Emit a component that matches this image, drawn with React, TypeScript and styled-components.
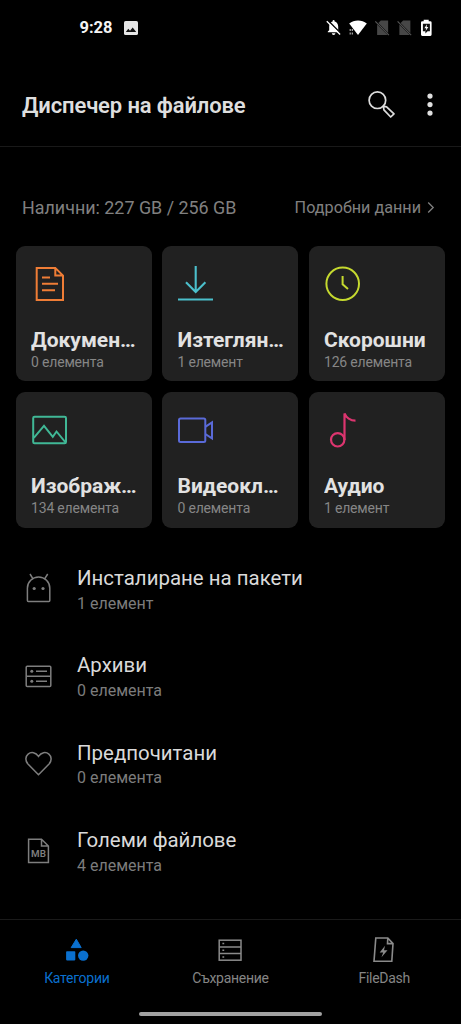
import React from "react";
import styled, { createGlobalStyle } from "styled-components";

const GlobalStyle = createGlobalStyle`
  * { box-sizing: border-box; }
  body {
    margin: 0;
    background: #000;
    font-family: Roboto, "Noto Sans", "Liberation Sans", sans-serif;
  }
  svg { display: block; flex: none; }
`;

const Screen = styled.div`
  width: 461px;
  height: 1024px;
  background: #000;
  display: flex;
  flex-direction: column;
  overflow: hidden;
`;

const StatusBar = styled.div`
  height: 56px;
  padding: 0 28px 0 79.5px;
  display: flex;
  align-items: center;
  justify-content: space-between;
`;

const StatusGroup = styled.div<{ $gap: number }>`
  display: flex;
  align-items: center;
  gap: ${(p) => p.$gap}px;
`;

const Clock = styled.span`
  font-size: 16.5px;
  line-height: 20px;
  font-weight: 700;
  color: #f4f4f4;
`;

const Header = styled.header`
  height: 91px;
  padding: 7px 20px 0 22px;
  display: flex;
  align-items: center;
  justify-content: space-between;
  border-bottom: 1px solid #191919;
`;

const Title = styled.h1`
  margin: 2px 0 0;
  font-size: 22px;
  line-height: 28px;
  font-weight: 600;
  letter-spacing: -0.13px;
  color: #dedede;
  white-space: nowrap;
`;

const HeaderActions = styled.div`
  display: flex;
  align-items: center;
  gap: 22px;
`;

const Summary = styled.div`
  height: 99px;
  padding: 22.5px 25px 0 22px;
  display: flex;
  align-items: center;
  justify-content: space-between;
  color: #808080;
  white-space: nowrap;
`;

const Available = styled.span`
  font-size: 17.9px;
  line-height: 24px;
`;

const Details = styled.span`
  display: flex;
  align-items: center;
  gap: 5px;
  font-size: 16.2px;
  line-height: 24px;
`;

const Grid = styled.div`
  margin: 0 16px;
  display: grid;
  grid-template-columns: repeat(3, 135.6px);
  grid-auto-rows: 135.4px;
  gap: 10.9px;
`;

const Card = styled.div`
  background: #212121;
  border-radius: 9px;
  padding: 20px 14px 0 15px;
  min-width: 0;
`;

const CardTitle = styled.div`
  margin-top: 25px;
  font-size: 21px;
  line-height: 26px;
  font-weight: 700;
  color: #e2e2e2;
  white-space: nowrap;
  overflow: hidden;
  text-overflow: ellipsis;
`;

const CardCount = styled.div`
  font-size: 14px;
  line-height: 18px;
  letter-spacing: -0.18px;
  color: #868686;
  white-space: nowrap;
`;

const List = styled.div`
  flex: 1;
  padding-top: 19.3px;
`;

const Row = styled.div`
  height: 87.4px;
  padding: 18px 22px 0 22px;
  display: flex;
  gap: 22px;
`;

const RowIcon = styled.div`
  padding-top: 7.5px;
`;

const RowTitle = styled.div`
  font-size: 20.45px;
  line-height: 26px;
  color: #dadada;
  white-space: nowrap;
`;

const RowCount = styled.div`
  margin-top: 0.7px;
  font-size: 16px;
  line-height: 24px;
  color: #7c7c7c;
  white-space: nowrap;
`;

const NavBar = styled.nav`
  height: 105px;
  border-top: 1px solid #1a1a1a;
  display: flex;
  flex-direction: column;
  align-items: center;
  justify-content: space-between;
  padding-bottom: 8px;
`;

const Tabs = styled.div`
  width: 100%;
  display: grid;
  grid-template-columns: repeat(3, 1fr);
`;

const Tab = styled.div<{ $active?: boolean }>`
  display: flex;
  flex-direction: column;
  align-items: center;
  padding-top: 15.6px;
  gap: 7.5px;
  font-size: 14px;
  line-height: 18px;
  letter-spacing: -0.28px;
  color: ${(p) => (p.$active ? "#0a70cf" : "#858585")};
`;

const HomeIndicator = styled.div`
  width: 183px;
  height: 4px;
  border-radius: 2px;
  background: #a2a2a2;
`;

const PictureIcon = () => (
  <svg width="14" height="14" viewBox="0 0 14 14">
    <rect width="14" height="14" rx="1.6" fill="#e6e6e6" />
    <path d="M1.8 11 L4.3 7.7 L6 9.8 L8.7 6.5 L12.2 11 Z" fill="#111" />
  </svg>
);

const StatusIcons = () => (
  <svg width="108" height="20" viewBox="325 18 108 20">
    <path d="M327.8 32.3 V31.6 L329.2 30.2 V26.5 C329.2 23.8 330.6 22 332.6 21.5 V20.9 A1 1 0 0 1 334.6 20.9 V21.5 C336.7 22 338.2 23.8 338.2 26.5 V30.2 L339.6 31.6 V32.3 Z" fill="#fff" />
    <path d="M331.8 33.2 H335.4 A1.8 1.8 0 0 1 331.8 33.2 Z" fill="#fff" />
    <path d="M327.8 20.3 L341.2 33.7" stroke="#000" strokeWidth="1.5" />
    <path d="M326.8 21.2 L340.1 34.5" stroke="#fff" strokeWidth="1.3" />
    <path d="M349.2 23.5 C354 19.5 362 19.5 366.8 23.5 L358 35 Z" fill="#fff" />
    <path d="M350.2 29 V34.6 M352.3 29 V34.6" stroke="#bbb" strokeWidth="1.1" strokeDasharray="2 1.6" />
    {[375.3, 397.6].map((x) => (
      <g key={x} transform={`translate(${x} 20.5)`}>
        <path d="M5.5 0 H12.8 V12.4 L3 2.6 Z" fill="#474747" />
        <path d="M1.8 4 V14.5 H12.3 Z" fill="#474747" />
        <path d="M0 .8 L13.6 14.6" stroke="#555" strokeWidth="1.1" />
      </g>
    ))}
    <path d="M423.7 19.8 H428.7 V21.2 H430.3 Q431.6 21.2 431.6 22.5 V34.6 Q431.6 36 430.3 36 H422.3 Q421 36 421 34.6 V22.5 Q421 21.2 422.3 21.2 H423.7 Z" fill="#fff" />
    <path d="M422.9 23.7 H429.9 V31.2 H427.6 L425.4 33.6 V31.2 H422.9 Z" fill="#111" />
    <path d="M427 24.3 L424.4 28.3 H426.2 L425.6 31 L428.4 27 H426.7 Z" fill="#fff" />
  </svg>
);

const SearchIcon = () => (
  <svg width="30" height="30" viewBox="0 0 30 30" fill="none" stroke="#dcdcdc">
    <circle cx="10.4" cy="10.2" r="8.3" strokeWidth="1.7" />
    <path d="M16.3 16.2 L19.6 16.8 L27 23.9 L23.7 27 L16.9 19.8 Z" strokeWidth="1.7" strokeLinejoin="round" />
  </svg>
);

const MoreIcon = () => (
  <svg width="22" height="24" viewBox="0 0 22 24" fill="#e0e0e0">
    <circle cx="11" cy="3.1" r="2.6" />
    <circle cx="11" cy="11.6" r="2.6" />
    <circle cx="11" cy="20.1" r="2.6" />
  </svg>
);

const ChevronIcon = () => (
  <svg width="10" height="14" viewBox="0 0 10 14" fill="none" stroke="#808080" strokeWidth="1.3">
    <path d="M2.2 1.5 L7.2 6.5 L2.2 11.5" />
  </svg>
);

const CardSvg = ({ color, children }: { color: string; children: React.ReactNode }) => (
  <svg width="36" height="36" viewBox="0 0 36 36" fill="none" stroke={color} strokeWidth="2">
    {children}
  </svg>
);

const DocumentIcon = () => (
  <CardSvg color="#ef7d36">
    <path d="M5.7 1.9 H24.3 L32 9.6 V33.9 H5.7 Z M24.3 1.9 V9.6 H32" />
    <path d="M11 11.5 H19 M11 17.7 H27 M11 24.2 H24" />
  </CardSvg>
);

const DownloadIcon = () => (
  <CardSvg color="#4bbfcb">
    <path d="M18.7 0 V25.5 M9 16.2 L18.7 26 L28.4 16.2 M1 33.5 H36" strokeWidth="2.1" />
  </CardSvg>
);

const RecentIcon = () => (
  <CardSvg color="#c5d92f">
    <circle cx="18.7" cy="17.8" r="16.3" />
    <path d="M18.6 10 V18.3 L24 23" />
  </CardSvg>
);

const ImageIcon = () => (
  <CardSvg color="#40b896">
    <rect x="2.2" y="4.7" width="32.8" height="26.6" rx="1.4" />
    <path d="M2.8 25.8 L13 13.8 L21.8 24.8 L25.5 19.5 L34.5 30.3" strokeWidth="1.9" />
  </CardSvg>
);

const VideoIcon = () => (
  <CardSvg color="#5a6ad8">
    <rect x="2" y="6.5" width="26.3" height="23.4" rx="1.5" />
    <path d="M28.3 14.8 L35 10.3 V26.4 L28.3 22" />
  </CardSvg>
);

const AudioIcon = () => (
  <CardSvg color="#dc356f">
    <circle cx="13.7" cy="27.8" r="6.7" strokeWidth="2.2" />
    <path d="M20.5 28 V1.5 C22 5.5 26.5 8.7 31.5 8.7" strokeWidth="2.2" />
  </CardSvg>
);

const LineSvg = ({ children }: { children: React.ReactNode }) => (
  <svg width="33" height="33" viewBox="0 0 33 33" fill="none" stroke="#7e7e7e" strokeWidth="1.5">
    {children}
  </svg>
);

const AndroidIcon = () => (
  <LineSvg>
    <path d="M5.4 28.6 V16.2 A11.2 11.2 0 0 1 27.8 16.2 V28.6 Q27.8 29.6 26.8 29.6 H6.4 Q5.4 29.6 5.4 28.6 Z" />
    <path d="M8 2 L11 6.8 M25.7 2 L22.6 6.8" />
    <g fill="#7e7e7e" stroke="none">
      <circle cx="12.2" cy="16.5" r="1.6" />
      <circle cx="21" cy="16.5" r="1.6" />
    </g>
  </LineSvg>
);

const ArchiveIcon = () => (
  <LineSvg>
    <rect x="4.2" y="6.2" width="24.6" height="20.2" rx="1" />
    <path d="M4.2 16.3 H28.8 M14 11.3 H25 M14 21.2 H25" />
    <g fill="#7e7e7e" stroke="none">
      <circle cx="9.8" cy="11.3" r="1.5" />
      <circle cx="9.8" cy="21.2" r="1.5" />
    </g>
  </LineSvg>
);

const HeartIcon = () => (
  <LineSvg>
    <path d="M16.5 27.8 L6.2 17.3 C2.7 13.5 3.6 9.3 6.1 7.1 C9.2 4.4 13.8 5.2 16.5 9.4 C19.2 5.2 23.8 4.4 26.9 7.1 C29.4 9.3 30.3 13.5 26.8 17.3 Z" />
  </LineSvg>
);

const LargeFileIcon = () => (
  <LineSvg>
    <path d="M6.6 4.2 H19.5 L26.4 11 V27.4 H6.6 Z M19.5 4.2 V11 H26.4" />
    <text x="16.5" y="22.3" textAnchor="middle" fontSize="9.8" fontWeight="600" fill="#7e7e7e" stroke="none">
      MB
    </text>
  </LineSvg>
);

const CategoriesIcon = () => (
  <svg width="26" height="26" viewBox="0 0 26 26" fill="#0a70cf">
    <path d="M12.3 3.2 L17.2 11.6 H7.2 Z" strokeWidth="1" stroke="#0a70cf" strokeLinejoin="round" />
    <rect x="2.1" y="15.2" width="9.2" height="9.2" rx="0.8" />
    <circle cx="19.2" cy="19.6" r="5.2" />
  </svg>
);

const StorageIcon = () => (
  <svg width="26" height="26" viewBox="0 0 26 26" fill="none" stroke="#8a8a8a" strokeWidth="1.5">
    <rect x="2.2" y="4.2" width="21.8" height="20" />
    <path d="M2.2 10.9 H24 M2.2 17.5 H24" />
    <path d="M5.4 7.5 H7.2 M5.4 14.2 H7.2 M5.4 20.9 H7.2" />
  </svg>
);

const FileDashIcon = () => (
  <svg width="26" height="26" viewBox="0 0 26 26" fill="none" stroke="#8a8a8a" strokeWidth="1.6">
    <path d="M4.8 2 H16.8 L22 7.6 L20.8 25.2 H3 Z M16.8 2 L16.5 7.6 H22" />
    <path d="M14 9.8 L8.7 16.5 H12.2 L10.5 21.2 L16.5 14.2 H13 Z" fill="#8a8a8a" stroke="none" />
  </svg>
);

const categories = [
  { title: "Документи", count: "0 елемента", Icon: DocumentIcon },
  { title: "Изтегляния", count: "1 елемент", Icon: DownloadIcon },
  { title: "Скорошни", count: "126 елемента", Icon: RecentIcon },
  { title: "Изображения", count: "134 елемента", Icon: ImageIcon },
  { title: "Видеоклипове", count: "0 елемента", Icon: VideoIcon },
  { title: "Аудио", count: "1 елемент", Icon: AudioIcon },
];

const collections = [
  { title: "Инсталиране на пакети", count: "1 елемент", Icon: AndroidIcon },
  { title: "Архиви", count: "0 елемента", Icon: ArchiveIcon },
  { title: "Предпочитани", count: "0 елемента", Icon: HeartIcon },
  { title: "Големи файлове", count: "4 елемента", Icon: LargeFileIcon },
];

export default function App() {
  return (
    <>
      <GlobalStyle />
      <Screen>
        <StatusBar>
          <StatusGroup $gap={11}>
            <Clock>9:28</Clock>
            <PictureIcon />
          </StatusGroup>
          <StatusIcons />
        </StatusBar>
        <Header>
          <Title>Диспечер на файлове</Title>
          <HeaderActions>
            <SearchIcon />
            <MoreIcon />
          </HeaderActions>
        </Header>
        <Summary>
          <Available>Налични: 227 GB / 256 GB</Available>
          <Details>
            Подробни данни
            <ChevronIcon />
          </Details>
        </Summary>
        <Grid>
          {categories.map(({ title, count, Icon }) => (
            <Card key={title}>
              <Icon />
              <CardTitle>{title}</CardTitle>
              <CardCount>{count}</CardCount>
            </Card>
          ))}
        </Grid>
        <List>
          {collections.map(({ title, count, Icon }) => (
            <Row key={title}>
              <RowIcon>
                <Icon />
              </RowIcon>
              <div>
                <RowTitle>{title}</RowTitle>
                <RowCount>{count}</RowCount>
              </div>
            </Row>
          ))}
        </List>
        <NavBar>
          <Tabs>
            <Tab $active>
              <CategoriesIcon />
              Категории
            </Tab>
            <Tab>
              <StorageIcon />
              Съхранение
            </Tab>
            <Tab>
              <FileDashIcon />
              FileDash
            </Tab>
          </Tabs>
          <HomeIndicator />
        </NavBar>
      </Screen>
    </>
  );
}
